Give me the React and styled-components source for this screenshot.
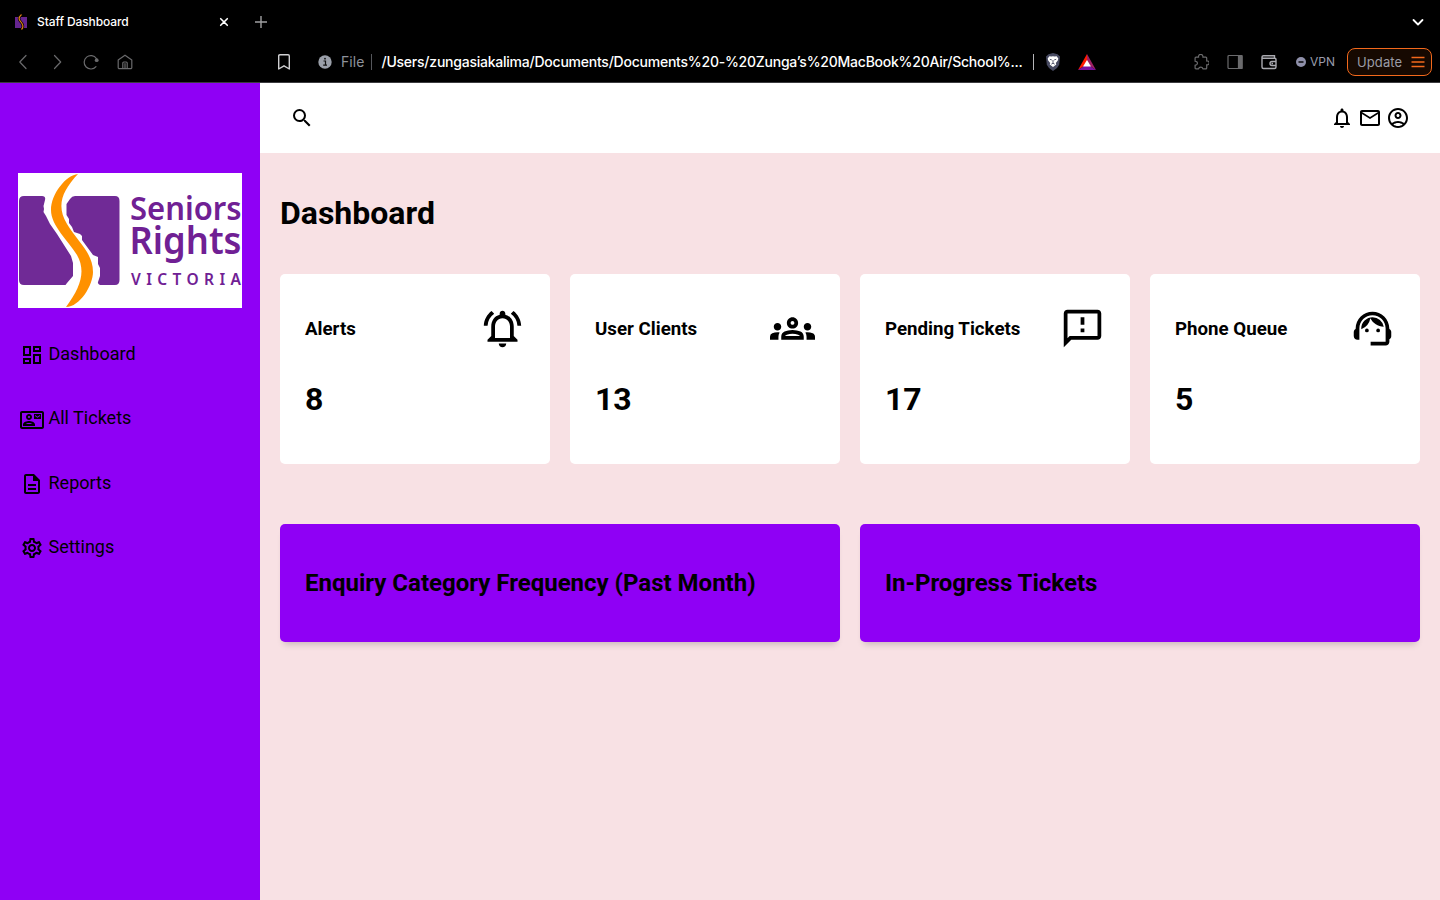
import React from "react";
import styled, { createGlobalStyle } from "styled-components";
import {
  MdSearch,
  MdOutlineNotifications,
  MdOutlineEmail,
  MdOutlineAccountCircle,
  MdOutlineDashboard,
  MdOutlineContactMail,
  MdOutlineDescription,
  MdOutlineSettings,
  MdOutlineNotificationsActive,
  MdOutlineGroups,
  MdOutlineFeedback,
  MdOutlineSupportAgent,
} from "react-icons/md";

const GlobalStyle = createGlobalStyle`
  *, *::before, *::after { box-sizing: border-box; }
  body { margin: 0; background: #f8e1e4; font-family: Roboto, sans-serif; color: #000; overflow: hidden; }
  svg { display: block; flex: none; }
`;

const Window = styled.div`
  width: 1440px;
  height: 900px;
  display: flex;
  flex-direction: column;
`;

/* Browser chrome */
const Chrome = styled.div`
  height: 83px;
  flex: none;
  background: #000;
  border-bottom: 1px solid #3c3c3f;
  font-family: Inter, sans-serif;
  color: #fff;
`;

const TabStrip = styled.div`
  height: 43px;
  display: flex;
  align-items: center;
  padding: 0 16px 0 14px;
`;

const Tab = styled.div`
  width: 215px;
  display: flex;
  align-items: center;
  gap: 8px;
  margin-right: 25px;
`;

const TabTitle = styled.span`
  flex: 1;
  font-size: 12px;
  font-weight: 500;
  letter-spacing: -0.1px;
  line-height: 16px;
`;

const Spacer = styled.div`
  flex: 1;
`;

const Toolbar = styled.div`
  height: 38px;
  display: flex;
  align-items: center;
  padding: 0 8px 0 15px;
`;

const NavButtons = styled.div`
  display: flex;
  gap: 18px;
  color: #6a6a6c;
`;

const AddressBar = styled.div`
  display: flex;
  align-items: center;
  margin-left: 143px;
  font-size: 14px;
  line-height: 20px;
`;

const Scheme = styled.span`
  width: 30px;
  margin-left: 9px;
  color: #8e929b;
  letter-spacing: 0.1px;
`;

const Divider = styled.span`
  width: 1px;
  height: 16px;
  background: ${(p) => p.$color};
`;

const Url = styled.span`
  width: 661px;
  padding-left: 9.5px;
  white-space: nowrap;
  font-weight: 500;
  letter-spacing: -0.235px;
`;

const Shields = styled.div`
  display: flex;
  align-items: center;
  gap: 17px;
  margin-left: 11px;
`;

const Extensions = styled.div`
  display: flex;
  align-items: center;
  gap: 18px;
  color: #6a6a6c;
`;

const Vpn = styled.div`
  display: flex;
  align-items: center;
  gap: 4px;
  margin: 0 12px 0 19px;
  font-size: 12px;
  line-height: 16px;
  color: #9a9cab;
`;

const UpdateButton = styled.div`
  width: 85px;
  height: 28px;
  display: flex;
  align-items: center;
  justify-content: space-between;
  padding: 0 6px 0 9px;
  border: 1px solid #f3691c;
  border-radius: 8px;
  background: #160901;
  color: #9b9ca6;
  font-size: 13px;
  letter-spacing: 0.1px;
`;

/* Page */
const Page = styled.div`
  flex: 1;
  display: grid;
  grid-template-columns: 260px 1fr;
  min-height: 0;
`;

const Sidebar = styled.aside`
  background: #8f00f5;
  padding: 90px 18px 0;
`;

const Menu = styled.ul`
  list-style: none;
  margin: 13.8px 0 0;
  padding: 0 2px;
`;

const MenuItem = styled.li`
  height: 64.4px;
  display: flex;
  align-items: center;
  gap: 4.5px;
  font-size: 18px;
  line-height: 22px;

  svg { margin-top: 2.4px; }
`;

const Content = styled.div`
  display: flex;
  flex-direction: column;
  background: #f8e1e4;
`;

const Header = styled.header`
  height: 70px;
  display: flex;
  align-items: center;
  justify-content: space-between;
  padding: 0 30px;
  background: #fff;
`;

const HeaderIcons = styled.div`
  display: flex;
  gap: 4px;
`;

const Main = styled.main`
  padding: 20px;
`;

const Title = styled.h1`
  margin: 21px 0 41px;
  font-size: 32px;
  line-height: 39px;
`;

const Stats = styled.div`
  display: grid;
  grid-template-columns: repeat(4, 1fr);
  gap: 20px;
`;

const StatCard = styled.section`
  height: 190px;
  padding: 32px 25px 0;
  border-radius: 5px;
  background: #fff;
`;

const StatHead = styled.div`
  display: flex;
  align-items: center;
  justify-content: space-between;
  height: 45px;
`;

const StatTitle = styled.h3`
  margin: 0;
  font-size: 18.72px;
  line-height: 22px;
`;

const StatValue = styled.div`
  margin-top: 29px;
  font-size: 32px;
  font-weight: 700;
  line-height: 38px;
`;

const Charts = styled.div`
  display: grid;
  grid-template-columns: repeat(2, 1fr);
  gap: 20px;
  margin-top: 60px;
`;

const ChartCard = styled.section`
  height: 118px;
  display: flex;
  align-items: center;
  padding: 0 25px;
  border-radius: 5px;
  background: #8f00f5;
  box-shadow: 0 6px 7px -4px rgba(0, 0, 0, 0.2);
`;

const ChartTitle = styled.h2`
  margin: 0;
  font-size: 24px;
  line-height: 28px;
`;

const InfoIcon = styled.svg`
  margin-left: 26px;
`;

const Line = ({ size = 16, width = 1.2, children }) => (
  <svg width={size} height={size} viewBox={`0 0 ${size} ${size}`} fill="none" stroke="currentColor" strokeWidth={width} strokeLinecap="round" strokeLinejoin="round">
    {children}
  </svg>
);

const Favicon = () => (
  <svg width="15" height="16" viewBox="0 0 15 16">
    <rect x="1" y="3" width="12" height="11" fill="#65258f" />
    <path d="M7.5 0.5C2.5 5 6.5 7 8 9.5S9.5 13.5 7.5 15.5" fill="none" stroke="#000" strokeWidth="2.6" />
    <path d="M7.5 0.5C2.5 5 6.5 7 8 9.5S9.5 13.5 7.5 15.5" fill="none" stroke="#d97f12" strokeWidth="1.2" />
  </svg>
);

const BraveLion = () => (
  <svg width="16" height="18" viewBox="0 0 16 18">
    <path d="M3.5 1.2 8 0l4.5 1.200 2.500 2.300-.8 8.200L12 15l-4 3-4-3-2.200-3.300L1 3.500z" fill="#474a61" />
    <path d="m4.400 3.200 2 .4L8 3.200l1.600.4 2-.4 1.700 2.300-.5 2-2 2.500.5 1.500L8 14l-3.300-2.500.5-1.500-2-2.500-.5-2z" fill="#fff" />
    <path d="m4.800 6.300 2 .6M11.200 6.300l-2 .6M8 7v3M6.300 11.200 8 10.200l1.700 1" fill="none" stroke="#474a61" strokeWidth=".9" />
  </svg>
);

const RewardsTriangle = () => (
  <svg width="18" height="16" viewBox="0 0 18 16">
    <path d="M9 0 0 16l9-6z" fill="#ff1a00" />
    <path d="m9 0 9 16-9-6z" fill="#9e1f63" />
    <path d="M0 16h18l-9-6z" fill="#7a12a0" />
    <path d="m9 6 4 6.500H5z" fill="#fff" />
  </svg>
);

const Logo = () => (
  <svg width="224" height="135" viewBox="0 0 224 135">
    <rect width="224" height="135" fill="#fff" />
    <path d="M6 23H24Q28 23 27 27L25.500 33 26 36 25.500 39 28 43 32 51 39 61 53 83 55 90V103L49 110 47.500 112H6Q1 112 1 107V28Q1 23 6 23Z" fill="#702a96" />
    <path d="M57 23H97Q101.500 23 101.500 28V107Q101.500 112 97 112H82Q79.500 111 80 109L82 103V95L80 91V84L75 82 64 67V63L62 61 56 59 54 54 51 50V46L48.500 42V31L52 26Q54 23 57 23Z" fill="#702a96" />
    <path d="M60 1C48 2 33 21 33 37C33 53 50 67 59 82C68 98 63 114 48 134C62 134 75 112 75 99C75 80 60 69 49 51C38 33 44 18 60 1Z" fill="#ff9100" />
    <g fill="#702094" fontFamily="'Noto Sans', sans-serif" fontWeight="600">
      <text x="112" y="47" fontSize="32" textLength="111.500" lengthAdjust="spacingAndGlyphs">Seniors</text>
      <text x="111.500" y="81" fontSize="38" textLength="112" lengthAdjust="spacingAndGlyphs">Rights</text>
      <text x="113" y="111.700" fontSize="15.500" textLength="110" lengthAdjust="spacing">VICTORIA</text>
    </g>
  </svg>
);

const MENU = [
  ["Dashboard", MdOutlineDashboard],
  ["All Tickets", MdOutlineContactMail],
  ["Reports", MdOutlineDescription],
  ["Settings", MdOutlineSettings],
];

const STATS = [
  ["Alerts", "8", MdOutlineNotificationsActive],
  ["User Clients", "13", MdOutlineGroups],
  ["Pending Tickets", "17", MdOutlineFeedback],
  ["Phone Queue", "5", MdOutlineSupportAgent],
];

const BrowserChrome = () => (
  <Chrome>
    <TabStrip>
      <Tab>
        <Favicon />
        <TabTitle>Staff Dashboard</TabTitle>
        <Line size={10} width={1.6}><path d="M1.700 1.700l6.600 6.600M8.300 1.700 1.700 8.300" /></Line>
      </Tab>
      <svg width="14" height="14" viewBox="0 0 14 14" stroke="#a0a0a2" strokeWidth="1.4"><path d="M1 7h12M7 1v12" /></svg>
      <Spacer />
      <Line size={12} width={1.8}><path d="m1.500 4 4.500 4.500L10.500 4" /></Line>
    </TabStrip>
    <Toolbar>
      <NavButtons>
        <Line><path d="M11 1.500 4.800 8l6.200 6.500" /></Line>
        <Line><path d="M5.500 1.500 11.700 8l-6.200 6.500" /></Line>
        <Line>
          <path d="M13 12.600A6.700 6.700 0 1 1 13.400 4.500" />
          <circle cx="13.700" cy="6.200" r="1.900" fill="currentColor" stroke="none" />
        </Line>
        <Line>
          <path d="M1.200 6 8 1.200 14.800 6v7.500a1.200 1.200 0 0 1-1.200 1.200H2.400a1.200 1.200 0 0 1-1.200-1.200zM5.800 14.500V9a1 1 0 0 1 1-1h2.400a1 1 0 0 1 1 1v5.500M8 9.500v5" />
        </Line>
      </NavButtons>
      <AddressBar>
        <svg width="16" height="16" viewBox="0 0 16 16" fill="none" stroke="#d0d0d2" strokeWidth="1.4" strokeLinejoin="round">
          <path d="M2.700 2q0-1.200 1.200-1.200h8.200q1.200 0 1.200 1.200v13L8 11.800 2.700 15z" />
        </svg>
        <InfoIcon width="14" height="14" viewBox="0 0 14 14">
          <circle cx="7" cy="7" r="6.700" fill="#9a9fa9" />
          <path d="M5.500 6h2v4M5.200 10.200h3.800" fill="none" stroke="#111" strokeWidth="1.2" />
          <circle cx="7" cy="3.700" r=".9" fill="#111" />
        </InfoIcon>
        <Scheme>File</Scheme>
        <Divider $color="#55575c" />
        <Url>/Users/zungasiakalima/Documents/Documents%20-%20Zunga’s%20MacBook%20Air/School%...</Url>
        <Divider $color="#b5b5b8" />
      </AddressBar>
      <Shields>
        <BraveLion />
        <RewardsTriangle />
      </Shields>
      <Spacer />
      <Extensions>
        <Line>
          <path d="M3 3.200h2.600a2.200 2.200 0 1 1 4.200 0h3q.9 0 .9.900v3a1.900 1.900 0 1 1 0 3.600v3.200q0 .9-.9.900H9.900a2.200 2.200 0 0 0-4.300 0H3q-.9 0-.9-.9V11a1.900 1.900 0 1 0 0-3.700V4.100q0-.9.900-.9z" />
        </Line>
        <Line><rect x="1" y="1.500" width="14" height="13" rx="1" /><path d="M11.500 1.500H15v13h-3.500z" fill="currentColor" /></Line>
        <svg width="16" height="16" viewBox="0 0 16 16" fill="none" stroke="#aaaab0" strokeWidth="1.4">
          <path d="M1 3v10q0 1.500 1.500 1.500h11Q15 14.500 15 13V5.500q0-1.200-1.200-1.200H2.500Q1 4.300 1 3q0-1.300 1.500-1.300h11V4M15 7.500h-4a2 2 0 0 0 0 4h4M10.500 9.500h1.500" />
        </svg>
      </Extensions>
      <Vpn>
        <svg width="10" height="10" viewBox="0 0 10 10"><circle cx="5" cy="5" r="5" fill="#8f90aa" /><path d="M2.500 5h5" stroke="#000" strokeWidth="1.4" /></svg>
        VPN
      </Vpn>
      <UpdateButton>
        Update
        <svg width="14" height="12" viewBox="0 0 14 12" stroke="#f3691c" strokeWidth="1.3"><path d="M.5 1.500h13M.5 6h13M.5 10.500h13" /></svg>
      </UpdateButton>
    </Toolbar>
  </Chrome>
);

export default function App() {
  return (
    <Window>
      <GlobalStyle />
      <BrowserChrome />
      <Page>
        <Sidebar>
          <Logo />
          <Menu>
            {MENU.map(([label, Icon]) => (
              <MenuItem key={label}><Icon size={24} />{label}</MenuItem>
            ))}
          </Menu>
        </Sidebar>
        <Content>
          <Header>
            <MdSearch size={24} />
            <HeaderIcons>
              <MdOutlineNotifications size={24} />
              <MdOutlineEmail size={24} />
              <MdOutlineAccountCircle size={24} />
            </HeaderIcons>
          </Header>
          <Main>
            <Title>Dashboard</Title>
            <Stats>
              {STATS.map(([label, value, Icon]) => (
                <StatCard key={label}>
                  <StatHead><StatTitle>{label}</StatTitle><Icon size={45} /></StatHead>
                  <StatValue>{value}</StatValue>
                </StatCard>
              ))}
            </Stats>
            <Charts>
              <ChartCard><ChartTitle>Enquiry Category Frequency (Past Month)</ChartTitle></ChartCard>
              <ChartCard><ChartTitle>In-Progress Tickets</ChartTitle></ChartCard>
            </Charts>
          </Main>
        </Content>
      </Page>
    </Window>
  );
}
